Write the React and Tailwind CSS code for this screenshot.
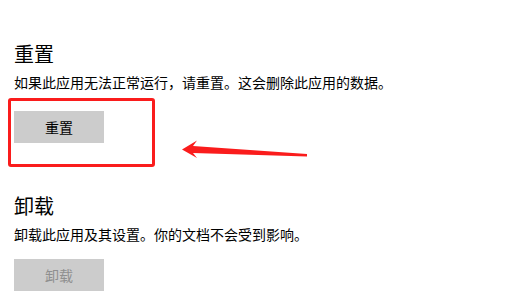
const FONT = '[font-family:"Noto_Sans_CJK_SC","Noto_Sans",sans-serif]'

function Section({ title, text, button, disabled, className, buttonGap }) {
  return (
    <section className={className}>
      <h2 className="text-[20px] leading-[28px] font-normal text-black">{title}</h2>
      <p className="mt-[4px] text-[14px] leading-[20px] text-black">{text}</p>
      <button
        type="button"
        disabled={disabled}
        className={`${buttonGap} flex h-[32px] w-[90px] items-center justify-center bg-[#cccccc] text-[14px] ${disabled ? 'text-[#8f8f8f]' : 'text-black'}`}
      >
        {button}
      </button>
    </section>
  )
}

export default function App() {
  return (
    <div className={`relative h-[291px] w-[506px] overflow-hidden bg-white pl-[14px] pt-[40px] ${FONT}`}>
      <Section
        title="重置"
        text="如果此应用无法正常运行，请重置。这会删除此应用的数据。"
        button="重置"
        buttonGap="mt-[19px]"
      />
      <Section
        className="mt-[49px]"
        title="卸载"
        text="卸载此应用及其设置。你的文档不会受到影响。"
        button="卸载"
        buttonGap="mt-[15px]"
        disabled
      />

      {/* annotation overlay */}
      <div className="pointer-events-none absolute left-[8px] top-[98px] h-[69px] w-[147px] rounded-[3px] border-[3px] border-[#fa1c1c]" />
      <svg className="pointer-events-none absolute left-0 top-0" width="506" height="291" viewBox="0 0 506 291">
        <polygon
          points="182,149.5 197,140.5 193,146 307,154 307,156.5 193,153 197,158"
          fill="#fa1c1c"
        />
      </svg>
    </div>
  )
}
